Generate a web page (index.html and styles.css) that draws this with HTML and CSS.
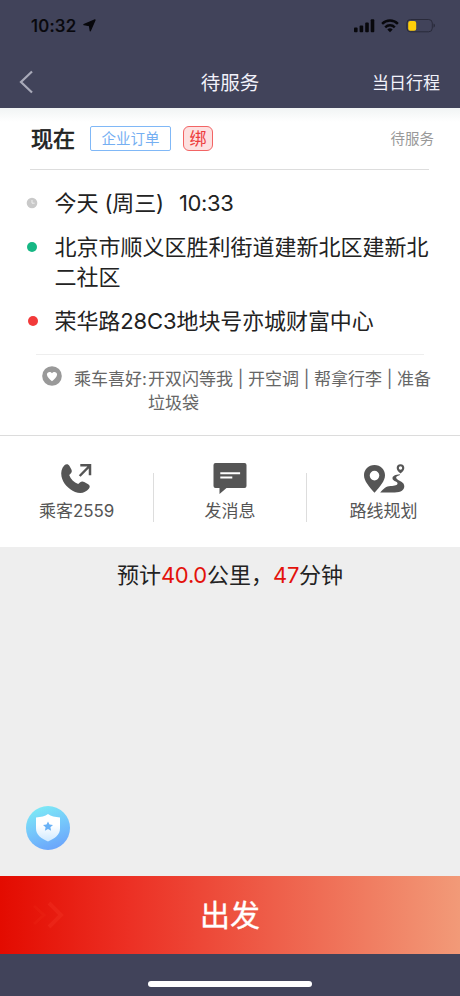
FILE: index.html
```html
<!DOCTYPE html>
<html lang="zh-CN">
<head>
<meta charset="utf-8">
<title>待服务</title>
<link rel="stylesheet" href="styles.css">
</head>
<body>
<div class="screen">
  <header class="header">
    <div class="status">
      <span class="clock">10:32</span>
      <svg class="locate" width="13" height="13" viewBox="0 0 13 13"><path d="M12 .9 7.300 11.800 6.500 6.600.9 5.600z" fill="#08080c" stroke="#08080c" stroke-width="1.300" stroke-linejoin="round"/></svg>
      <svg class="signals" width="82" height="16" viewBox="0 0 82 16">
        <g fill="#08080c">
          <rect x="0" y="9.6" width="3.6" height="4.6" rx=".9"/><rect x="5.6" y="7.5" width="3.6" height="6.7" rx=".9"/><rect x="11.2" y="4.5" width="3.6" height="9.7" rx=".9"/><rect x="16.7" y="1.3" width="3.6" height="12.9" rx=".9"/>
        </g>
        <g fill="none" stroke="#08080c" stroke-width="2.4"><path d="M28.1 5.9a11 11 0 0 1 15.8 0"/><path d="M31.2 9.3a6.8 6.8 0 0 1 9.6 0"/></g>
        <path d="M33.3 11.4a4 4 0 0 1 5.4 0L36 14.2z" fill="#08080c"/>
        <rect x="52.900" y="1.500" width="25.400" height="12.300" rx="3.600" fill="none" stroke="#292a3a"/>
        <rect x="54.200" y="3" width="8" height="9.700" rx="2" fill="#ffcf0a"/>
        <path d="M79.500 5.600c2 .8 2 3.300 0 4.100z" fill="#292a3a"/>
      </svg>
    </div>
    <nav class="nav">
      <svg class="back" width="16" height="26" viewBox="0 0 16 26"><path d="M14 2.500 3 13l11 10.500" fill="none" stroke="#a9aab9" stroke-width="2.200"/></svg>
      <h1 class="title">待服务</h1>
      <span class="trips">当日行程</span>
    </nav>
  </header>

  <main class="order">
    <div class="summary">
      <b class="now">现在</b>
      <span class="tag">企业订单</span>
      <span class="bind">绑</span>
      <span class="state">待服务</span>
    </div>
    <ul class="route">
      <li class="stop"><svg class="dot" width="12" height="12" viewBox="0 0 12 12"><circle cx="6" cy="6" r="5.300" fill="#c9c9c9"/><path d="M6 3v3.200h2.600" fill="none" stroke="#eee"/></svg><span class="when">今天 (周三)<span class="time">10:33</span></span></li>
      <li class="stop"><svg class="dot" width="12" height="12" viewBox="0 0 12 12"><circle cx="6" cy="6" r="5" fill="#16b784"/></svg><span>北京市顺义区胜利街道建新北区建新北二社区</span></li>
      <li class="stop"><svg class="dot" width="12" height="12" viewBox="0 0 12 12"><circle cx="7" cy="6" r="5" fill="#f23a3a"/></svg><span class="dest">荣华路28C3地块号亦城财富中心</span></li>
    </ul>
    <div class="prefs">
      <svg class="heart" width="20" height="20" viewBox="0 0 20 20"><circle cx="10" cy="10" r="9.800" fill="#999"/><path d="M10 15.200C7.700 13.400 4.900 11 4.900 8.500c0-2.600 3.500-3.500 5.100-1.300 1.600-2.200 5.100-1.300 5.100 1.300 0 2.500-2.800 4.900-5.100 6.700z" fill="#fff"/></svg>
      <span class="label">乘车喜好:</span>
      <div class="list">
        <div class="line"><span>开双闪等我</span><span class="bar">|</span><span>开空调</span><span class="bar">|</span><span>帮拿行李</span><span class="bar">|</span><span>准备</span></div>
        <div class="line">垃圾袋</div>
      </div>
    </div>
  </main>

  <section class="actions">
    <div class="action">
      <svg width="36" height="32" viewBox="0 0 36 32"><path d="M5.200 2.600C7 .8 9.200.9 10.500 2.900l1.900 3.500c.8 1.600.4 3-.9 4.300l-1.300 1.400c1.500 4.400 4.700 7.500 9 8.900l1.700-1.500c1.400-1.200 2.800-1.300 4.300-.5l4 2.200c1.900 1.200 2 2.900.6 4.600-3.200 4-8.200 5.300-13.700 3.100C9.300 26.200 4 20.500 2.500 13.600 1.700 9.200 2.600 5.500 5.200 2.600z" fill="#555"/><path d="m20.700 13 9.300-9.500M21.300 2.200h9.700v10" fill="none" stroke="#555" stroke-width="2.500"/></svg>
      <span>乘客<span class="digits">2559</span></span>
    </div>
    <div class="action">
      <svg width="36" height="32" viewBox="0 0 36 32"><path d="M3.500 0h29q2 0 2 2v21q0 2-2 2H14.500L7.500 31v-6h-4q-2 0-2-2V2q0-2 2-2z" fill="#555"/><path d="M8.300 10.300h19.800M8.300 14.600h12" stroke="#fff" stroke-width="2"/></svg>
      <span>发消息</span>
    </div>
    <div class="action">
      <svg width="42" height="32" viewBox="0 0 42 32"><path fill-rule="evenodd" d="M11.500 2C17.600 2 22 6.500 22 12.200 22 18 17 23.500 11.500 29.800 6 23.500 1 18 1 12.200 1 6.500 5.400 2 11.500 2zm0 5.800a4.800 4.800 0 1 0 0 9.600 4.800 4.800 0 0 0 0-9.600z" fill="#555"/><path fill-rule="evenodd" d="M37.500 1.300a3.800 3.800 0 0 1 3.800 3.800c0 2.100-1.800 3.800-3.800 5.300-2-1.500-3.800-3.200-3.800-5.300a3.800 3.800 0 0 1 3.800-3.800zm0 2a1.700 1.700 0 1 0 0 3.400 1.700 1.700 0 0 0 0-3.400z" fill="#555"/><path d="M37 11.200c-4.500.2-7.800 1.800-7.500 4.300.3 2.700 4.800 2.800 5 4.700.1 2-2.500 2.500-7 2.900-4.500.4-6.500 2.200-10.300 6.400h14.500c6.500 0 9.600-2.500 9.600-6.200 0-3.300-2.800-4.500-5.200-5.800-2.600-1.400-4.500-3.400-1-4.700 1-.4 1.900-.5 1.900-1.600z" fill="#555"/></svg>
      <span>路线规划</span>
    </div>
  </section>

  <section class="estimate">
    <p>预计<em>40.0</em>公里，<em>47</em>分钟</p>
    <svg class="shield" width="44" height="44" viewBox="0 0 44 44">
      <defs><linearGradient id="disc" x1=".3" y1="0" x2=".65" y2="1"><stop offset="0" stop-color="#7ceaf5"/><stop offset=".5" stop-color="#75c6fb"/><stop offset="1" stop-color="#6ba4fb"/></linearGradient><linearGradient id="face" x1="0" y1="0" x2="0" y2="1"><stop offset=".4" stop-color="#fff"/><stop offset="1" stop-color="#cfe9ff"/></linearGradient></defs>
      <circle cx="22" cy="22" r="22" fill="url(#disc)"/>
      <path d="M22 8c3 2.200 7 3 12 3.500v11C34 28.500 29 32.500 22 35.500 15 32.500 10 28.500 10 22.500v-11C15 11 19 10.200 22 8z" fill="url(#face)"/>
      <path d="m22 15.500 1.500 3.100 3.500.4-2.600 2.300.7 3.500-3.100-1.700-3.100 1.700.7-3.500-2.600-2.300 3.500-.4z" fill="#69b2f6"/>
    </svg>
  </section>

  <footer class="footer">
    <div class="go">
      <svg class="arrows" width="36" height="28" viewBox="0 0 36 28" fill="none" stroke="#ff4b35"><path d="m4 5 10 9-10 9" stroke-width="3" opacity=".1"/><path d="m19 2 12 12-12 12" stroke-width="4" opacity=".2"/></svg>
      <span class="go-text">出发</span>
    </div>
    <div class="home"><div class="pill"></div></div>
  </footer>
</div>
</body>
</html>
```
FILE: styles.css
```css
* { box-sizing: border-box; margin: 0; padding: 0; }
body { font-family: Inter, "Noto Sans CJK SC", sans-serif; color: #222; background: #eee; }
em { font-style: normal; }
svg { display: block; flex: none; }
.screen { width: 460px; height: 996px; display: flex; flex-direction: column; background: #eee; overflow: hidden; }

.header { height: 108px; background: #41435a; flex: none; }
.status { height: 53px; display: flex; align-items: center; padding: 0 24px 2px 31px; color: #08080c; }
.clock { font-size: 17px; font-weight: 500; line-height: 20px; width: 48px; -webkit-text-stroke: .2px #08080c; letter-spacing: .2px; }
.locate { margin-left: 4px; }
.signals { margin-left: auto; }
.nav { height: 55px; display: grid; grid-template-columns: 1fr auto 1fr; align-items: center; padding: 2px 20px 0 18px; color: #f2f2fa; }
.title { font-size: 19.5px; font-weight: 400; line-height: 28px; padding: 2px 0 0 2px; }
.trips { font-size: 17px; line-height: 24px; justify-self: end; padding-top: 2px; }

.order { height: 328px; flex: none; background: linear-gradient(#f1f4f4, #fff 14px); border-bottom: 1px solid #dcdcdc; }
.summary { height: 62px; margin: 0 31px 0 30px; display: flex; align-items: center; border-bottom: 1px solid #ddd; }
.now { font-size: 22px; line-height: 30px; font-weight: 400; margin-left: 1px; -webkit-text-stroke: .7px #222; }
.tag { margin-left: 15px; width: 81px; height: 25px; border: 1px solid #80b8f7; border-radius: 2px; color: #75aff2; font-size: 14.5px; line-height: 24px; text-align: center; }
.bind { margin-left: 12px; width: 30px; height: 25px; border: 1px solid #f26464; border-radius: 6px; background: #fde0e0; color: #ed3c3c; font-size: 17px; line-height: 24px; text-align: center; }
.state { margin-left: auto; margin-right: -5px; font-size: 14.5px; line-height: 20px; color: #999; }

.route { list-style: none; padding: 18px 26px 0; height: 184px; display: flex; flex-direction: column; gap: 13px; }
.stop { display: flex; gap: 16.5px; font-size: 22px; line-height: 30.5px; }
.dot { margin-top: 9px; }
.when { letter-spacing: -.1px; }
.time { margin-left: 15px; letter-spacing: -.4px; }
.dest { letter-spacing: -.1px; }
.prefs { height: 81px; margin: 0 24px 0 36px; display: flex; padding: 13px 0 0 6px; font-size: 17px; line-height: 24px; color: #666; background: linear-gradient(#eee, #eee) 0 0 / 388px 1px no-repeat; }
.heart { margin-right: 12px; margin-top: -1px; }
.label { flex: none; width: 74px; }
.list { width: 288px; }
.line { display: flex; height: 24px; }
.bar { width: 15px; text-align: center; }

.actions { height: 111px; flex: none; background: #fff; display: grid; grid-template-columns: 153px 153px 154px; align-items: center; padding-top: 12px; }
.action { height: 49px; display: flex; flex-direction: column; align-items: center; justify-content: center; gap: 4px; font-size: 17px; line-height: 24px; color: #555; padding-bottom: 10px; }
.action svg, .action > span { flex: none; }
.digits { letter-spacing: -.1px; }
.action + .action { border-left: 1px solid #ddd; }

.estimate { flex: 1; display: flex; flex-direction: column; justify-content: space-between; padding: 13px 26px 26px; }
.estimate p { font-size: 22px; line-height: 30px; text-align: center; }
.estimate em { color: #e3120b; letter-spacing: -.3px; }

.footer { flex: none; height: 120px; background: #41435a; }
.go { height: 78px; display: grid; grid-template-columns: 1fr auto 1fr; align-items: center; padding: 0 30px; background: linear-gradient(90deg, #e30b00, #ec3024 28%, #ee5f4a 60%, #f29a78); color: #fff; font-size: 30px; line-height: 40px; }
.go-text { -webkit-text-stroke: .3px #fff; }
.home { height: 42px; display: flex; justify-content: center; padding-top: 27px; }
.pill { width: 164px; height: 6px; border-radius: 3px; background: #fff; }
```
